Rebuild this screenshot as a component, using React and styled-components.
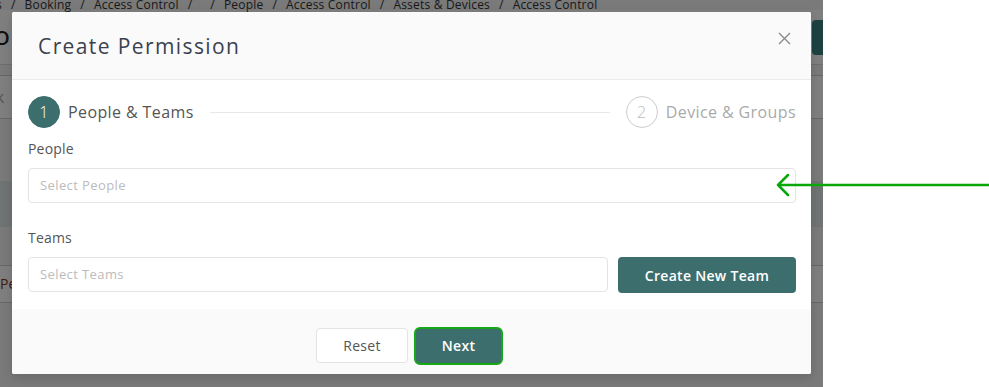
import styled, { createGlobalStyle } from "styled-components";

const GlobalStyle = createGlobalStyle`
    body {
        margin: 0;
        font-family: "Open Sans", "Liberation Sans", sans-serif;
    }
`

const Screen = styled.div`
    position: relative;
    display: flex;
    width: 989px;
    height: 387px;
    overflow: hidden;
    background-color: #fff;
`

const AppArea = styled.div`
    position: relative;
    width: 823px;
    height: 387px;
    overflow: hidden;
    background-color: #f4f4f4;
`

const Breadcrumb = styled.div`
    display: flex;
    gap: 9px;
    margin: -4px 0 0 -4px;
    height: 14px;
    font-size: 12px;
    letter-spacing: 0.2px;
    color: #333;
    white-space: nowrap;
`

const TitleRow = styled.div`
    display: flex;
    justify-content: space-between;
    align-items: center;
    height: 54px;
    border-bottom: 1px solid #ddd;
    background-color: #fff;
`

const PageTitle = styled.div`
    font-size: 20px;
    font-weight: 600;
    color: #222;
    margin-left: -6px;
`

const PageButton = styled.div`
    width: 150px;
    height: 35px;
    margin-right: -139px;
    background-color: #3d8585;
    border-radius: 4px;
`

const SearchRow = styled.div`
    height: 42px;
    margin-top: 10px;
    border-top: 1px solid #ccc;
    border-bottom: 1px solid #ccc;
    font-size: 16px;
    line-height: 42px;
    color: #aaa;
    margin-left: -12px;
    background-color: #fff;
`

const GrayBlock = styled.div`
    height: 46px;
    margin-top: 62px;
    background-color: #e2e8ea;
`

const TableRow = styled.div`
    height: 36px;
    margin-top: 38px;
    border-top: 1px solid #ccc;
    border-bottom: 1px solid #ccc;
    font-size: 14px;
    line-height: 36px;
    color: #8a3a1a;
    background-color: #fff;
`

const Backdrop = styled.div`
    position: absolute;
    inset: 0;
    background-color: rgba(0, 0, 0, 0.5);
`

const Modal = styled.div`
    position: absolute;
    left: 12px;
    top: 12px;
    width: 799px;
    display: flex;
    flex-direction: column;
    background-color: #fff;
    border-radius: 2px;
    overflow: hidden;
    box-shadow: 0 4px 12px rgba(0, 0, 0, 0.15);
`

const Header = styled.div`
    display: flex;
    justify-content: space-between;
    align-items: center;
    height: 67px;
    padding: 0 20px 0 26px;
    background-color: #fafafa;
    border-bottom: 1px solid #ebebeb;
`

const Title = styled.h2`
    margin: 0;
    font-size: 21px;
    font-weight: 400;
    color: #3b4150;
    letter-spacing: 1.4px;
`

const CloseBtn = styled.div`
    display: flex;
    align-items: center;
    justify-content: center;
    width: 14px;
    height: 14px;
    margin-top: -14px;
    cursor: pointer;
`

const Body = styled.div`
    display: flex;
    flex-direction: column;
    padding: 16px 15px 16px 16px;
`

const Stepper = styled.div`
    display: flex;
    align-items: center;
    height: 32px;
`

const Step = styled.div`
    display: flex;
    align-items: center;
    gap: 8px;
    font-size: 16px;
    letter-spacing: 0.4px;
    color: ${({ active }) => active ? '#555' : '#aaa'};
    white-space: nowrap;
`

const StepCircle = styled.div`
    display: flex;
    align-items: center;
    justify-content: center;
    box-sizing: border-box;
    width: 32px;
    height: 32px;
    border-radius: 50%;
    font-size: 16px;
    font-weight: 300;
    color: ${({ active }) => active ? '#fff' : '#bbb'};
    background-color: ${({ active }) => active ? '#3d6e6e' : '#fff'};
    border: 1px solid ${({ active }) => active ? '#3d6e6e' : '#ccc'};
`

const StepLine = styled.div`
    flex: 1;
    height: 1px;
    margin: 0 16px;
    background-color: #e8e8e8;
`

const Label = styled.div`
    margin-top: ${(props) => props.marginTop || '11px'};
    margin-bottom: 10px;
    font-size: 14px;
    letter-spacing: 0.2px;
    color: #555;
`

const Row = styled.div`
    display: flex;
    gap: 10px;
`

const Select = styled.div`
    flex: 1;
    box-sizing: border-box;
    height: 35px;
    padding: 0 11px;
    border: 1px solid #e4e4e4;
    border-radius: 4px;
    font-size: 13px;
    letter-spacing: 0.4px;
    line-height: 33px;
    color: #bbb;
`

const PrimaryBtn = styled.button`
    box-sizing: border-box;
    width: ${(props) => props.width || 'auto'};
    height: ${(props) => props.height || '36px'};
    border: ${(props) => props.focused ? '2px solid #14a814' : 'none'};
    border-radius: ${(props) => props.focused ? '6px' : '4px'};
    background-color: #3d6e6e;
    color: #fff;
    font-family: inherit;
    font-size: 14px;
    font-weight: 600;
    letter-spacing: 0.3px;
    cursor: pointer;
`

const Footer = styled.div`
    display: flex;
    justify-content: center;
    align-items: center;
    gap: 6px;
    box-sizing: border-box;
    height: 65px;
    padding: 8px 4px 0 0;
    background-color: #fafafa;
`

const GhostBtn = styled.button`
    box-sizing: border-box;
    width: 92px;
    height: 35px;
    border: 1px solid #e4e4e4;
    border-radius: 4px;
    background-color: #fff;
    color: #555;
    font-family: inherit;
    font-size: 14px;
    letter-spacing: 0.3px;
    cursor: pointer;
`

const Arrow = styled.svg`
    position: absolute;
    left: 774px;
    top: 172px;
`

const App = () => {
    const crumbs = ['s', '/', 'Booking', '/', 'Access Control', '/', '', '/', 'People', '/', 'Access Control', '/', 'Assets & Devices', '/', 'Access Control'];

    return (
        <Screen>
            <GlobalStyle />
            <AppArea>
                <Breadcrumb>
                    {crumbs.map((c, i) => <span key={i}>{c}</span>)}
                </Breadcrumb>
                <TitleRow>
                    <PageTitle>O</PageTitle>
                    <PageButton />
                </TitleRow>
                <SearchRow>ck</SearchRow>
                <GrayBlock />
                <TableRow>Pe</TableRow>
                <Backdrop />
                <Modal>
                    <Header>
                        <Title>Create Permission</Title>
                        <CloseBtn>
                            <svg width="13" height="13" viewBox="0 0 13 13">
                                <path d="M1 1 L12 12 M12 1 L1 12" stroke="#8a8a8a" strokeWidth="1.4" fill="none" />
                            </svg>
                        </CloseBtn>
                    </Header>
                    <Body>
                        <Stepper>
                            <Step active>
                                <StepCircle active>1</StepCircle>
                                People &amp; Teams
                            </Step>
                            <StepLine />
                            <Step>
                                <StepCircle>2</StepCircle>
                                Device &amp; Groups
                            </Step>
                        </Stepper>
                        <Label>People</Label>
                        <Row>
                            <Select>Select People</Select>
                        </Row>
                        <Label marginTop="25px">Teams</Label>
                        <Row>
                            <Select>Select Teams</Select>
                            <PrimaryBtn width="178px">Create New Team</PrimaryBtn>
                        </Row>
                    </Body>
                    <Footer>
                        <GhostBtn>Reset</GhostBtn>
                        <PrimaryBtn focused width="89px" height="38px">Next</PrimaryBtn>
                    </Footer>
                </Modal>
            </AppArea>
            <Arrow width="215" height="26" viewBox="0 0 215 26">
                <path d="M4 13 H215 M14 3 L4 13 L14 23" stroke="#0aa70a" strokeWidth="2.5" fill="none" strokeLinecap="round" strokeLinejoin="round" />
            </Arrow>
        </Screen>
    );
};

export default App;
